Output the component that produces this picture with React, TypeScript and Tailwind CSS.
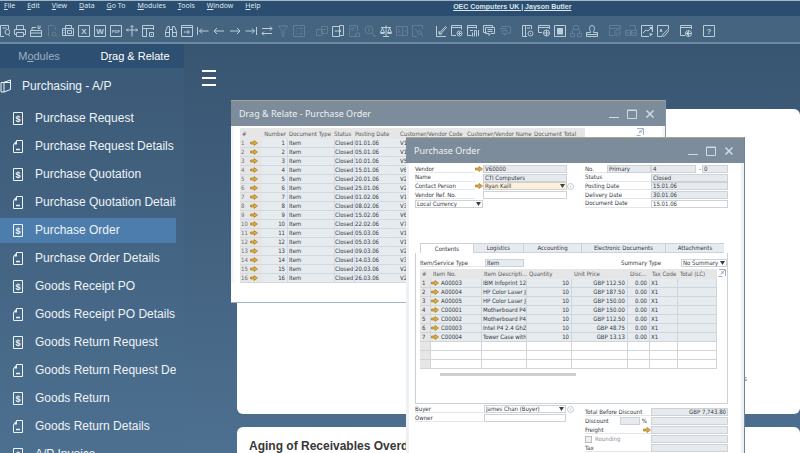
import type { ReactNode } from 'react'
import clsx from 'clsx'

type Tool = { name: string; d: string; fill?: string; letter?: string; dim?: boolean }

const menus = ['File', 'Edit', 'View', 'Data', 'Go To', 'Modules', 'Tools', 'Window', 'Help']

const frame = 'M.5 .5h11v11h-11z'

const toolGroups: Tool[][] = [
    [
        { name: 'Preview', d: 'M10.5 4V.5h-8v11H6M9.5 9.500a2.500 2.500 0 1 1 0-5 2.500 2.500 0 0 1 0 5M10.500 9.500l1.500 2M4.500 3h4' },
        { name: 'Print', d: 'M2.500 4V.5h7V4M2.500 9.500h-2v-5h11v5h-2M2.500 7.500h7v4h-7z' },
        { name: 'E-Mail', d: 'M.5 5.500h11v6H.5zM2 5V2.500h4M8 .5v3h2v-3M.5 8h11' },
        { name: 'SMS', d: 'M2.500 11.500v-11h5l2 2V5M6 9a2 2 0 1 0 4 0 2 2 0 1 0-4 0M10 10.500l1.500 1', dim: true },
        { name: 'Fax', d: 'M3.500 3V.5h6V3M.5 3.500h11v7H.5zM3.500 3.500v7M5.500 5.500h4v3h-4zM1.500 5.500h1M1.500 7.500h1' },
        { name: 'Excel', d: frame, letter: 'X' },
        { name: 'Word', d: frame, letter: 'W' },
        { name: 'PDF', d: frame, letter: 'PDF' },
        { name: 'Launch', d: 'M6 .5v11M.5 5h11M4.500 2L6 .5 7.500 2M2 3.500L.5 5 2 6.500M10 3.500L11.500 5 10 6.500' },
        { name: 'Lock Screen', d: 'M5 11.500H.5V.5h11V5M.5 3.500h11M4.500 3.500v8M7.500 7.500h4v4h-4zM9.500 9v1' },
    ],
    [
        { name: 'Find', d: 'M.5 10.500v-4L2.500 1.500h2v10h-4zM11.500 10.500v-4L9.500 1.500h-2v10h4zM4.500 4.500h3M.5 7.500h4M7.500 7.500h4' },
        { name: 'Add', d: 'M.5 .5h11v11H.5zM.5 2.500h11M3 7h5M6.500 5L8.500 7 6.500 9' },
        { name: 'First Record', d: 'M.5 2v8M2.500 6h9M5 3.500L2.500 6 5 8.500' },
        { name: 'Previous Record', d: 'M1 6h10M4 3L1 6l3 3' },
        { name: 'Next Record', d: 'M1 6h10M8 3l3 3-3 3' },
        { name: 'Last Record', d: 'M11.500 2v8M.5 6h9M7 3.500L9.500 6 7 8.500' },
        { name: 'Refresh', d: 'M1 3.500h10M9 1.500l2 2-2 2M11 8.500H1M3 6.500l-2 2 2 2' },
        { name: 'Filter', d: 'M1.500 1h9L7 6v5.500H5V6z', dim: true },
        { name: 'Sort', d: 'M.5 .5h11v11H.5zM3 3.500h1M3 8.500h1M6.500 3.500h3M6.500 8.500h3M3 6h1M8 6h1', dim: true },
    ],
    [
        { name: 'Base Document', d: 'M5.500 1.500h6v7h-6zM.5 4.500h6v6h-6zM7 4.500h3', dim: true },
        { name: 'Target Document', d: 'M7.500 2.500V.5h4v10h-4v-2M.5 1.500h7v10H.5zM2.500 6h6M7 4l2 2-2 2' },
        { name: 'Gross Profit', d: 'M8 11.500H1.500v-11h8V6M3 3h5M3 5h3M8 8h3.500v3.500H8z', dim: true },
        { name: 'Payment Means', d: 'M1 5a4 4 0 1 0 8 0 4 4 0 1 0-8 0M5 3v4M8 8l3.500 3.500M9 11h3', dim: true },
        { name: 'Volume and Weight', d: 'M6 .5v11M3 11.500h6M1 2.500h10M2.500 3L.5 7.500h4zM9.500 3L7.500 7.500h4z', fill: 'M.5 7.500h4v1.500h-4zM7.500 7.500h4v1.500h-4z' },
        { name: 'Transaction Journal', d: 'M.5 1.500h11v9H.5zM6.500 1.500v9M3 4v4M8.500 6h2', dim: true },
        { name: 'Layout Designer', d: 'M.5 11.500V.5h10V4M.5 11.500h4M3 3.500l3 4M5.500 7.500a2 2 0 1 0 4 0 2 2 0 1 0-4 0M9 9l2.500 2.500', dim: true },
    ],
    [
        { name: 'Form Settings', d: 'M1.500 1v10.500H11M4 8.500l6.500-7 1 1-6 6.500zM4 6v3h3' },
        { name: 'Query Manager', d: 'M5 10.500H.5V.5h10v4M.5 2.500h10M6 8.500a2.500 2.500 0 1 0 5 0 2.500 2.500 0 1 0-5 0M8.500 7v3M7 8.500h3' },
        { name: 'Query Wizard', d: 'M4.500 10.500h-4V.5h9v3M.5 2.500h9M3 5.500h3M5.500 11.500v-4M7.500 11.500v-6h2v6M11.500 11V5' },
        { name: 'Messages', d: 'M3.500 7.500h-3V.5h9v2M2.500 2.500h9v6H8l-2 2v-2H2.500zM4.500 4.500h5M4.500 6.500h5' },
        { name: 'Alerts', d: 'M2 1.500h9.500v7H9M.5 3.500h7M3 5.500h5v3L6 10.500v-2H3z', dim: true },
    ],
    [
        { name: 'Calendar', d: 'M5 11.500H.5V.5h9V4M3.500 .5v11M5 3h3M6 8.500a2.500 2.500 0 1 0 5 0 2.500 2.500 0 1 0-5 0M8.500 8v1' },
        { name: 'My Settings', d: 'M4 7.500H.5V.5h11V4M.5 2.500h11M5.500 8a3 3 0 1 0 6 0 3 3 0 1 0-6 0M8.500 5v6M5.500 8h6' },
        { name: 'Worksheet', d: frame, fill: 'M3 3h6v6.500H3z' },
        { name: 'Org Chart', d: 'M4 .5h4l1 4H3zM.5 8.500h4v3h-4zM7.500 8.500h4v3h-4zM2.500 8V5M9.500 8V5', dim: true },
        { name: 'Employees', d: 'M3.500 3.500a2.500 3 0 1 1 5 0c0 2-1 2-1 4h4v4H.5v-4h4c0-2-1-2-1-4M.5 9.500h11' },
    ],
    [
        { name: 'Dashboard', d: 'M5 10.500H.5V.5h11v4M.5 3.500h11M5.500 8a3 3 0 1 0 6 0 3 3 0 1 0-6 0M7 8l1 1 2-2', dim: true },
        { name: 'Widgets', d: 'M.5 5.500v5h5v-5zM6.500 5.500h5v5h-5zM4.500 .5h6v5M.5 8h11', dim: true },
        { name: 'Analytics', d: 'M8 11.500H.5V.5h11V7M2 8l3-3 2 1 3-3', fill: 'M8 2h3v3zM8.500 8l3.500 1-3 2.500z' },
        { name: 'Edit Report', d: 'M5 11.500H.5V.5h11V4M3 7l1-3 1 3M5 10.500l5.500-6 1.500 1-5 6z' },
    ],
    [{ name: 'Web Client', d: 'M5 10.500H.5V.5h11V4M.5 2.500h11M5.500 8.500a3 3 0 1 0 6 0 3 3 0 1 0-6 0M5.500 8.500h6M8.500 5.500v6M7.500 7v3' }],
    [{ name: 'Help', d: frame, letter: '?' }],
]

const modules = [
    'Purchase Request', 'Purchase Request Details', 'Purchase Quotation', 'Purchase Quotation Details',
    'Purchase Order', 'Purchase Order Details', 'Goods Receipt PO', 'Goods Receipt PO Details',
    'Goods Return Request', 'Goods Return Request Details', 'Goods Return', 'Goods Return Details', 'A/P Invoice',
]

const orders = [
    ['01.01.06', 'V1'], ['05.01.06', 'V1'], ['10.01.06', 'V5'], ['15.01.06', 'V6'],
    ['20.01.06', 'V2'], ['25.01.06', 'V2'], ['01.02.06', 'V1'], ['08.02.06', 'V3'],
    ['15.02.06', 'V6'], ['22.02.06', 'V7'], ['05.03.06', 'V1'], ['05.03.06', 'V1'],
    ['09.03.06', 'V2'], ['14.03.06', 'V3'], ['20.03.06', 'V2'], ['26.03.06', 'V2'],
]

const lines = [
    ['A00003', 'IBM Infoprint 122', 'GBP 112.50'],
    ['A00004', 'HP Color Laser Je', 'GBP 187.50'],
    ['A00005', 'HP Color Laser Je', 'GBP 150.00'],
    ['C00001', 'Motherboard P4', 'GBP 150.00'],
    ['C00002', 'Motherboard P4', 'GBP 112.50'],
    ['C00003', 'Intel P4 2.4 GhZ', 'GBP 48.75'],
    ['C00004', 'Tower Case with', 'GBP 13.13'],
]

function ToolIcon({ tool }: { tool: Tool }) {
    return (
        <button type="button" aria-label={tool.name} className={clsx('size-3 shrink-0', tool.dim ? 'text-[#627e95]' : 'text-[#bccddA]')}>
            <svg viewBox="0 0 12 12" className="size-3" fill="none" stroke="currentColor">
                <path d={tool.d} />
                {tool.fill && <path d={tool.fill} fill="currentColor" stroke="none" />}
                {tool.letter && (
                    <text
                        x="6"
                        y={tool.letter.length > 1 ? 8 : 9}
                        textAnchor="middle"
                        fontSize={tool.letter.length > 1 ? 4 : 8}
                        fontWeight="bold"
                        fill="currentColor"
                        stroke="none"
                    >
                        {tool.letter}
                    </text>
                )}
            </svg>
        </button>
    )
}

function LinkArrow() {
    return (
        <svg viewBox="0 0 8 6" className="h-[6px] w-2 shrink-0">
            <path d="M.5 2h3.500V.5L7.500 3 4 5.500V4H.5z" fill="#dcae40" stroke="#a57a24" strokeWidth=".7" />
        </svg>
    )
}

function ExpandIcon() {
    return (
        <svg viewBox="0 0 8 8" className="size-2 shrink-0" fill="none" stroke="#9fb1c3">
            <path d="M1 .5h6.500V7M7 1L2.500 5.500M3 3h2v2M.5 7.500h4" />
        </svg>
    )
}

function InfoDot() {
    return (
        <svg viewBox="0 0 7 7" className="size-[7px] shrink-0" fill="none" stroke="#c3c8cd">
            <circle cx="3.5" cy="3.5" r="3" />
            <path d="M2.500 3h2M3.500 3v2" strokeWidth=".7" />
        </svg>
    )
}

function TitleBar({ title }: { title: string }) {
    return (
        <header className="flex h-[26px] items-center justify-between border-t border-[#a9a68f] bg-[#7c8c9b] pr-[10px] pl-2 text-[#edf1f4]">
            <h2 className="font-['Noto_Sans'] text-[9px]">{title}</h2>
            <div className="flex gap-2 text-[#c9dbe6]">
                <button type="button" aria-label="Minimize">
                    <svg viewBox="0 0 10 10" className="size-[10px]"><path d="M0 8.500h10" stroke="currentColor" /></svg>
                </button>
                <button type="button" aria-label="Maximize">
                    <svg viewBox="0 0 10 10" className="size-[10px]"><path d="M.5 1h9v8.500h-9zM.5 1.500h9" stroke="currentColor" fill="none" /></svg>
                </button>
                <button type="button" aria-label="Close">
                    <svg viewBox="0 0 10 10" className="size-[10px]"><path d="M1.500 1.500l7 7M8.500 1.500l-7 7" stroke="currentColor" strokeWidth="1.600" /></svg>
                </button>
            </div>
        </header>
    )
}

function Field({ label, value, className }: { label: string; value?: string; className?: string }) {
    return (
        <input
            aria-label={label}
            defaultValue={value}
            className={clsx('h-2 min-w-0 px-[2px] leading-[8px] shadow-[inset_0_0_0_1px_#cdd2d7]', className ?? 'w-full bg-[#e6eaef]')}
        />
    )
}

function Select({ label, value, className }: { label: string; value: string; className: string }) {
    return (
        <div className={clsx('relative', className)}>
            <select aria-label={label} className="block h-2 w-full appearance-none px-[2px] leading-[8px] shadow-[inset_0_0_0_1px_#cdd2d7]">
                <option>{value}</option>
            </select>
            <svg viewBox="0 0 5 4" className="pointer-events-none absolute top-[2px] right-[2px] h-1 w-[5px]">
                <path d="M0 0h5L2.500 4z" fill="#3b3f44" />
            </svg>
        </div>
    )
}

function Label({ children }: { children: ReactNode }) {
    return <span className="flex h-2 min-w-0 items-center border-b border-[#e4e7ea] whitespace-nowrap">{children}</span>
}

function OrderListWindow() {
    return (
        <section className="absolute top-[100px] left-[231px] flex h-[203px] w-[434px] flex-col border-b border-[#9fb0bf] bg-white shadow-[1px_0_0_#8696a5]">
            <TitleBar title="Drag & Relate - Purchase Order" />
            <div className="flex justify-between border-x-3 border-[#f3f5f7] pt-[2px] pr-[18px] pl-[6px]">
                <table className="w-[345px] table-fixed border-separate border-spacing-0 text-left leading-[8px]">
                    <colgroup>
                        <col className="w-[10px]" /><col className="w-[12px]" /><col className="w-[25px]" /><col className="w-[47px]" />
                        <col className="w-[20px]" /><col className="w-[46px]" /><col className="w-[66px]" /><col className="w-[66px]" /><col />
                    </colgroup>
                    <thead className="bg-[#e6e6e6] text-[#55595e]">
                        <tr className="h-[11px] whitespace-nowrap *:font-normal">
                            <th className="pl-[2px]">#</th><th></th><th className="pr-px text-right">Number</th>
                            <th className="pl-[2px]">Document Type</th><th>Status</th><th className="pl-px">Posting Date</th>
                            <th>Customer/Vendor Code</th><th className="pl-px">Customer/Vendor Name</th><th className="pl-[2px]">Document Total</th>
                        </tr>
                    </thead>
                    <tbody className="bg-[#e6ebf0] *:*:border-b *:*:border-[#d3d8de]">
                        {orders.map(([date, vendor], i) => (
                            <tr key={i} className="h-[9px]">
                                <td className="bg-[#e6e6e6] pl-px text-[#6b6f74]">{i + 1}</td>
                                <td className="bg-[#e6e6e6]"><LinkArrow /></td>
                                <td className="pr-[2px] text-right">{i + 1}</td>
                                <td className="border-l pl-px">Item</td>
                                <td className="border-l">Closed</td>
                                <td className="border-l">{date}</td>
                                <td>{vendor}</td>
                                <td className="border-l"></td>
                                <td className="border-l"></td>
                            </tr>
                        ))}
                    </tbody>
                </table>
                <ExpandIcon />
            </div>
        </section>
    )
}

function PurchaseOrderWindow() {
    return (
        <section className="absolute top-[137px] left-[406px] w-[339px] border-r border-[#6e8497] bg-white">
            <TitleBar title="Purchase Order" />
            <div className="border-x-3 border-[#eef1f4] pt-[2px] pr-[13px] pb-10 pl-[6px]">
                <div className="flex justify-between">
                    <div className="grid h-[43px] w-[159px] grid-cols-[60px_8px_84px_7px] items-center">
                        <Label>Vendor</Label><LinkArrow /><Field label="Vendor" value="V60000" /><span />
                        <Label>Name</Label><span /><Field label="Name" value="CTI Computers" /><span />
                        <Label>Contact Person</Label><LinkArrow /><Select label="Contact Person" value="Ryan Kaill" className="bg-[#fdf0d8]" /><InfoDot />
                        <Label>Vendor Ref. No.</Label><span /><Field label="Vendor Ref. No." className="w-full bg-white" /><span />
                        <Select label="Currency" value="Local Currency" className="col-span-2 bg-white" /><span /><span />
                    </div>
                    <div className="grid h-[43px] w-[143px] grid-cols-[22px_44px_45px_32px] items-center">
                        <Label>No.</Label><Field label="Series" value="Primary" /><Field label="Number" value="4" />
                        <span className="flex items-center gap-px pl-[3px]">-<Field label="Segment" value="0" /></span>
                        <div className="col-span-2"><Label>Status</Label></div><div className="col-span-2 flex"><Field label="Status" value="Closed" /></div>
                        <div className="col-span-2"><Label>Posting Date</Label></div><div className="col-span-2 flex"><Field label="Posting Date" value="15.01.06" /></div>
                        <div className="col-span-2"><Label>Delivery Date</Label></div><div className="col-span-2 flex"><Field label="Delivery Date" value="30.01.06" /></div>
                        <div className="col-span-2"><Label>Document Date</Label></div>
                        <div className="col-span-2 flex"><Field label="Document Date" value="15.01.06" className="w-full bg-white" /></div>
                    </div>
                </div>

                <div className="mt-[35px] grid h-[10px] grid-cols-[53px_50px_58px_84px_59px] pl-[5px]">
                    {['Contents', 'Logistics', 'Accounting', 'Electronic Documents', 'Attachments'].map((tab, i) => (
                        <button key={tab} type="button" className={clsx('border-t border-l border-[#cdd2d7] whitespace-nowrap', i > 0 && 'border-b bg-[#e6ebf0]')}>
                            {tab}
                        </button>
                    ))}
                </div>

                <div className="border-x border-b border-[#cdd2d7] pt-[6px] pb-[27px] pl-1">
                    <div className="flex h-[10px] items-start">
                        <div className="w-[65px]"><Label>Item/Service Type</Label></div>
                        <Field label="Item/Service Type" value="Item" className="w-[39px] bg-[#e6ebf0]" />
                        <span className="ml-auto w-[60px] leading-2">Summary Type</span>
                        <Select label="Summary Type" value="No Summary" className="w-[46px]" />
                    </div>
                    <div className="flex gap-px">
                        <table className="w-[297px] table-fixed border-separate border-spacing-0 text-left leading-[8px]">
                            <colgroup>
                                <col className="w-[11px]" /><col className="w-[51px]" /><col className="w-[45px]" /><col className="w-[45px]" />
                                <col className="w-[56px]" /><col className="w-[22px]" /><col className="w-[28px]" /><col />
                            </colgroup>
                            <thead className="bg-[#e6e6e6] text-[#55595e]">
                                <tr className="h-[10px] whitespace-nowrap *:pl-[2px] *:font-normal">
                                    <th>#</th><th>Item No.</th><th>Item Descripti...</th><th>Quantity</th>
                                    <th>Unit Price</th><th>Disc...</th><th>Tax Code</th><th>Total (LC)</th>
                                </tr>
                            </thead>
                            <tbody className="*:h-[9px] *:*:border-r *:*:border-b *:*:border-[#d0d5da]">
                                {lines.map(([item, text, price], i) => (
                                    <tr key={item} className="bg-[#e6ebf0]">
                                        <td className="bg-[#e6e6e6] pl-[2px]">{i + 1}</td>
                                        <td><span className="flex items-center gap-[2px]"><LinkArrow />{item}</span></td>
                                        <td className="overflow-hidden pl-px whitespace-nowrap">{text}</td>
                                        <td className="pr-[2px] text-right">10</td>
                                        <td className="pr-[2px] text-right whitespace-nowrap">{price}</td>
                                        <td className="pr-[2px] text-right">0.00</td>
                                        <td className="pl-px">X1</td>
                                        <td></td>
                                    </tr>
                                ))}
                                {[8, 9, 10].map((row) => (
                                    <tr key={row}>
                                        <td className="bg-[#e6e6e6]"></td><td></td><td></td><td></td><td></td><td></td><td></td><td></td>
                                    </tr>
                                ))}
                            </tbody>
                        </table>
                        <ExpandIcon />
                    </div>
                    <div className="mt-1 ml-5 h-[3px] w-[136px] bg-[#cfcfcf]" />
                </div>

                <div className="mt-px flex items-start justify-between">
                    <div className="grid w-[159px] grid-cols-[68px_82px_7px] items-center gap-x-px gap-y-px">
                        <Label>Buyer</Label><Select label="Buyer" value="James Chan (Buyer)" className="bg-white" /><InfoDot />
                        <Label>Owner</Label><Field label="Owner" className="w-full bg-white" /><span />
                    </div>
                    <div className="mt-[3px] grid w-[143px] grid-cols-[66px_77px] items-center gap-y-px">
                        <Label>Total Before Discount</Label><Field label="Total Before Discount" value="GBP 7,743.80" className="w-full bg-[#e6eaef] text-right" />
                        <span className="flex h-2 items-center justify-between pr-1">
                            Discount
                            <span className="flex items-center gap-[2px]"><Field label="Discount percent" className="w-5 bg-[#e6eaef]" />%</span>
                        </span>
                        <Field label="Discount" />
                        <span className="flex h-2 items-center justify-between border-b border-[#e4e7ea]">Freight<LinkArrow /></span>
                        <Field label="Freight" />
                        <label className="flex h-2 items-center gap-[3px] text-[#8d9297]">
                            <input type="checkbox" className="size-[7px] appearance-none border border-[#b8bdc2] bg-[#f0f1f2]" />
                            Rounding
                        </label>
                        <Field label="Rounding amount" />
                        <Label>Tax</Label><Field label="Tax" />
                    </div>
                </div>
            </div>
        </section>
    )
}

export default function App() {
    return (
        <div className="relative flex h-screen flex-col overflow-hidden bg-linear-to-b from-[#36526e] to-[#4e7090] font-['Liberation_Sans',sans-serif]">
            <nav className="grid h-4 shrink-0 grid-cols-[2fr_auto_1fr] items-start border-t border-[#a3b7c6] bg-[#2b4e70] px-1 font-['Noto_Sans'] text-[7px] leading-[9px] text-[#dbe5ec]">
                <div className="flex gap-3">
                    {menus.map((menu) => (
                        <button key={menu} type="button" className="whitespace-nowrap">
                            <span className="underline">{menu[0]}</span>{menu.slice(1)}
                        </button>
                    ))}
                </div>
                <a href="#company" className="pt-px font-['Liberation_Sans'] font-bold whitespace-nowrap underline">OEC Computers UK | Jayson Butler</a>
            </nav>
            <div className="flex h-[28px] shrink-0 items-center gap-[11px] border-b-2 border-[#6a8ba3] bg-[#44647f] pt-1">
                {toolGroups.map((group, i) => (
                    <div key={i} className="flex gap-1 first:-ml-[2px]">
                        {group.map((tool) => <ToolIcon key={tool.name} tool={tool} />)}
                    </div>
                ))}
            </div>

            <div className="flex min-h-0 flex-1">
                <aside className="w-[184px] shrink-0 overflow-hidden bg-[#4a7494]/15 text-[12px] text-[#eef3f7]">
                    <div className="grid h-6 grid-cols-[78px_1fr] bg-[#2d4f71] text-[11px]">
                        <button type="button" className="text-[#9db0c1]">M<span className="underline">o</span>dules</button>
                        <button type="button" className="pl-2 text-white">D<span className="underline">r</span>ag &amp; Relate</button>
                    </div>
                    <h1 className="flex h-9 items-center gap-[10px]">
                        <svg viewBox="0 0 12 14" className="h-[14px] w-3 shrink-0" fill="none" stroke="currentColor">
                            <path d="M3.500 3.500L10.500 1v9.500L4 13H1V3.500h3M4 3.500V13M4 3.500h7" />
                        </svg>
                        Purchasing - A/P
                    </h1>
                    <ul className="w-[176px]">
                        {modules.map((name) => (
                            <li key={name} className="flex h-7 items-center">
                                <a
                                    href="#module"
                                    className={clsx('flex h-[25px] w-full items-center gap-3 overflow-hidden pl-[13px] whitespace-nowrap', name === 'Purchase Order' && 'bg-[#4c7dac]')}
                                >
                                    <svg viewBox="0 0 10 13" className="h-[13px] w-[10px] shrink-0" fill="none" stroke="currentColor">
                                        {name.endsWith('Details') ? (
                                            <>
                                                <path d="M3.500 .5h6v12h-9v-8" />
                                                <path d="M0 4.500L4 0v4.500z" fill="currentColor" stroke="none" />
                                                <path d="M3 9.500h4" strokeWidth="1.500" />
                                            </>
                                        ) : (
                                            <>
                                                <path d="M.5 .5h9v12h-9z" />
                                                <text x="5" y="9.500" textAnchor="middle" fontSize="9" fontWeight="bold" fill="currentColor" stroke="none">$</text>
                                            </>
                                        )}
                                    </svg>
                                    {name}
                                </a>
                            </li>
                        ))}
                    </ul>
                </aside>

                <main className="flex min-w-0 flex-1 flex-col pl-[18px]">
                    <button type="button" aria-label="Menu" className="mt-[26px] flex w-[14px] shrink-0 flex-col gap-[5px] *:h-[2px] *:w-full *:bg-white">
                        <span /><span /><span />
                    </button>
                    <div className="mt-[23px] ml-[35px] flex h-[305px] shrink-0 items-end justify-end rounded-md bg-white pr-[53px] pb-[31px] text-[8px] leading-none text-[#777]">s</div>
                    <div className="mt-[13px] ml-[35px] h-40 shrink-0 rounded-md bg-white px-3 pt-[10px]">
                        <h2 className="text-[12px] font-bold text-[#383838]">Aging of Receivables Overdue</h2>
                    </div>
                </main>
            </div>

            <div className="font-['DejaVu_Sans_Condensed','DejaVu_Sans'] text-[6px] leading-[8px] text-[#33373c]">
                <OrderListWindow />
                <PurchaseOrderWindow />
            </div>
        </div>
    )
}
